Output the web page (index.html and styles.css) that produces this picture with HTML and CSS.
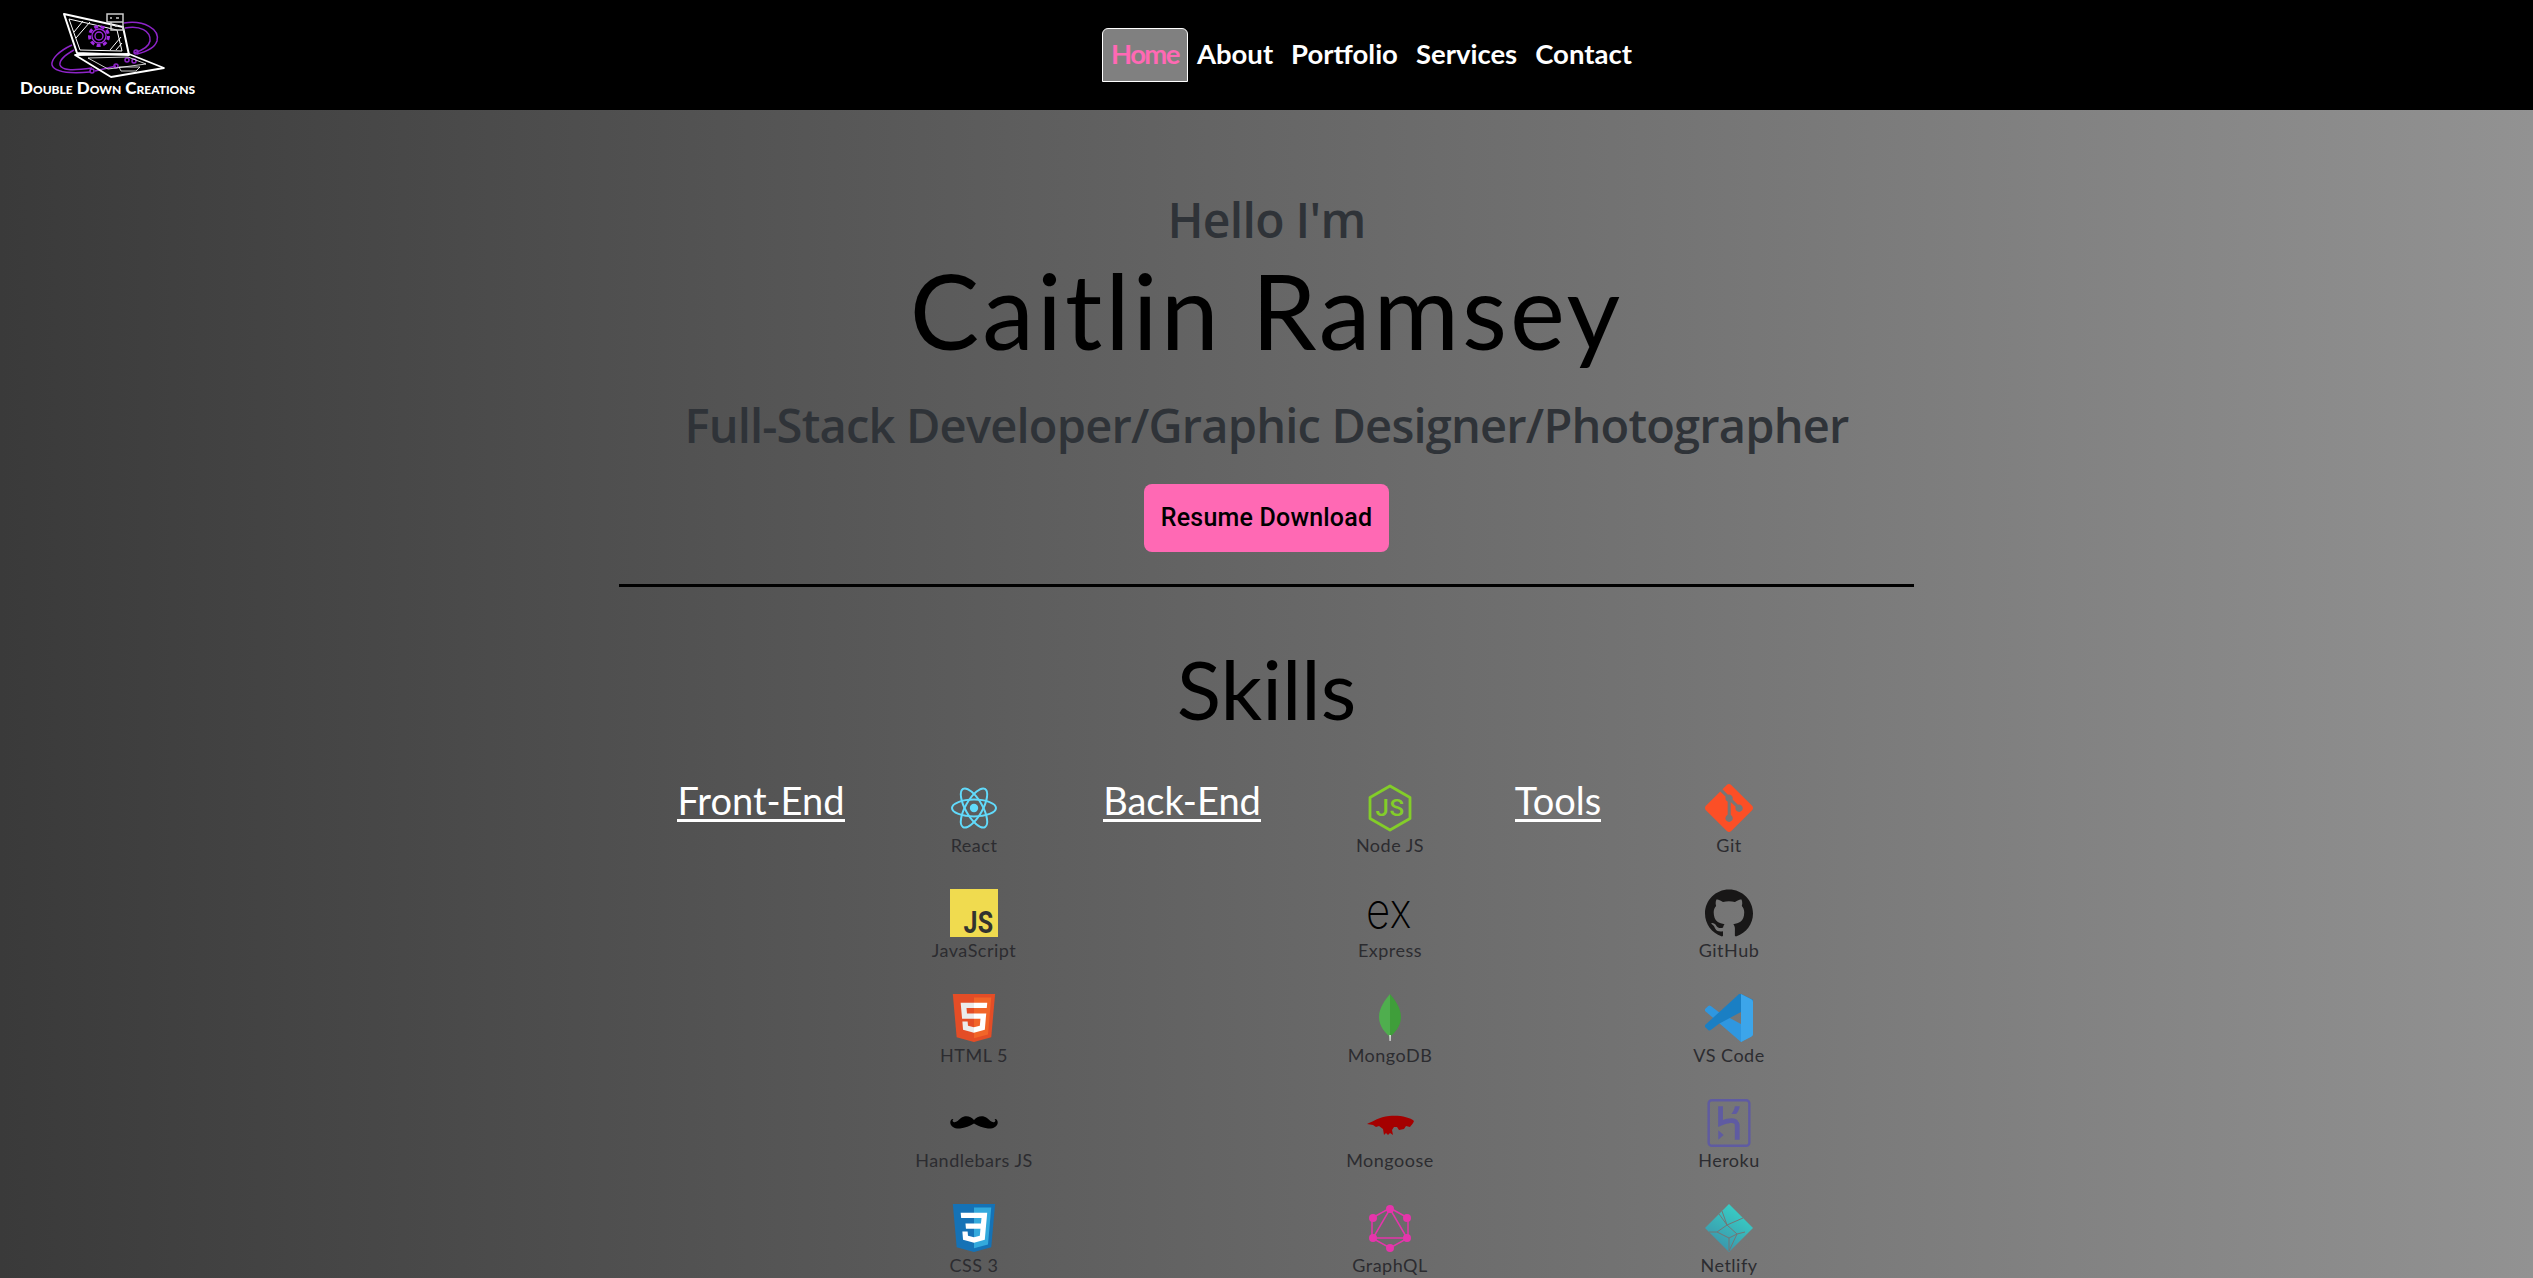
FILE: index.html
```html
<!DOCTYPE html>
<html>
<head>
    <title>Caitlin Ramsey</title>
    <meta charset="utf-8" />
    <link rel="stylesheet" href="styles.css">
</head>
<body>

<!-- Top bar -->
<header class="topbar">
    <a class="logo" href="#">
        <svg class="logo-mark" viewBox="0 0 200 80" width="200" height="80">
            <!-- orbit lines -->
            <g fill="none" stroke="#8e24c8" stroke-width="1.5">
                <path d="M124 23c20-3 36 6 33 18-2 6-8 10-20 13"/>
                <path d="M125 28c15-3 26 3 25 13-1 5-6 9-16 12"/>
                <path d="M72 45c-13 6-21 14-20 20 2 6 14 9 38 7"/>
                <path d="M74 50c-9 5-15 10-14 15 2 5 10 6 32 3"/>
                <path d="M95 71l21-5"/>
                <circle cx="136" cy="52" r="2"/>
                <circle cx="127" cy="60" r="2"/>
                <circle cx="134" cy="61" r="2"/>
                <circle cx="92" cy="71" r="2"/>
                <circle cx="116" cy="66" r="2"/>
            </g>
            <!-- laptop -->
            <g fill="none" stroke="#fff" stroke-linejoin="round">
                <path d="M64 14l59 13 6 28-52-2z" stroke-width="2"/>
                <path d="M69 19l48 11 5 21-42-1z" stroke-width="1"/>
                <path d="M74 32l9-11M76 38l14-16M110 50l11-13M116 50l6-7" stroke-width="1"/>
                <path d="M75 55l54-1 35 14-53 9z" stroke-width="1.800"/>
                <path d="M88 58l40-1 18 7-38 5z" stroke-width=".8"/>
                <path d="M119 67h21l-4 4h-15z" stroke-width=".8"/>
            </g>
            <!-- dice on the lid -->
            <g fill="none" stroke="#ccc" stroke-width="1.500">
                <path d="M107 14h16v8h-16zM111 22h12v8h-12z"/>
                <path d="M110 18h2M116 18h3M115 26h3"/>
            </g>
            <!-- gear -->
            <g fill="none" stroke="#a02be0">
                <circle cx="99" cy="36" r="9.500" stroke-width="3" stroke-dasharray="4 2.600"/>
                <circle cx="99" cy="36" r="7" stroke-width="1.300"/>
                <circle cx="99" cy="36" r="4" stroke-width="1.300"/>
            </g>
        </svg>
        <span class="logo-name">Double Down Creations</span>
    </a>
    <nav class="main-nav">
        <a class="nav-link active" href="#">Home</a>
        <a class="nav-link" href="#">About</a>
        <a class="nav-link" href="#">Portfolio</a>
        <a class="nav-link" href="#">Services</a>
        <a class="nav-link" href="#">Contact</a>
    </nav>
</header>

<main class="page">
    <!-- Intro -->
    <section class="intro">
        <p class="hello">Hello I'm</p>
        <h1 class="name">Caitlin Ramsey</h1>
        <h2 class="role">Full-Stack Developer/Graphic Designer/Photographer</h2>
        <a class="resume-btn" href="#">Resume Download</a>
    </section>

    <hr class="rule">

    <!-- Skills -->
    <section class="skills">
        <h2 class="skills-title">Skills</h2>
        <div class="skills-grid">
            <h3 class="skill-heading">Front-End</h3>
            <ul class="skill-list">
                <li class="skill">
                    <svg class="icon" viewBox="-12 -12 24 24">
                        <circle r="2.100" fill="#61dafb"/>
                        <g fill="none" stroke="#61dafb" stroke-width="1">
                            <ellipse rx="11" ry="4.200"/>
                            <ellipse rx="11" ry="4.200" transform="rotate(60)"/>
                            <ellipse rx="11" ry="4.200" transform="rotate(120)"/>
                        </g>
                    </svg>
                    <span>React</span>
                </li>
                <li class="skill">
                    <svg class="icon lettered" viewBox="0 0 50 50">
                        <rect width="50" height="50" fill="#f0db4f"/>
                        <text class="js-mark" transform="translate(14 46) scale(1 1.250)">JS</text>
                    </svg>
                    <span>JavaScript</span>
                </li>
                <li class="skill">
                    <svg class="icon" viewBox="0 0 512 512">
                        <path fill="#e44d26" d="M71 460L30 0h451l-41 460-185 52z"/>
                        <path fill="#f16529" d="M256 472l149-41 35-394H256z"/>
                        <path fill="#ebebeb" d="M256 208h-75l-5-58h80V94H114l1 15 14 156h127zM256 355h-1l-63-17-4-45h-56l7 89 116 32h1z"/>
                        <path fill="#fff" d="M255 208v57h70l-7 73-63 17v59l116-32 1-10 13-149 2-15h-16zM255 94v56h137l1-12 3-29 1-15z"/>
                    </svg>
                    <span>HTML 5</span>
                </li>
                <li class="skill">
                    <svg class="icon" viewBox="0 0 48 48">
                        <path fill="#000" d="M24 21c-3-4-9-5-13-2-3 2.500-5 5-7.500 4-1-.4-1.300-2 0-3-2-.500-3.500 1.500-3.200 4 .5 3.500 4.700 6 9.700 5.500 5-.5 10-2.500 14-5 4 2.500 9 4.500 14 5 5 .5 9.200-2 9.700-5.500.3-2.500-1.200-4.500-3.200-4 1.300 1 1 2.600 0 3-2.500 1-4.500-1.500-7.500-4-4-3-10-2-13 2z"/>
                    </svg>
                    <span>Handlebars JS</span>
                </li>
                <li class="skill">
                    <svg class="icon" viewBox="0 0 512 512">
                        <path fill="#1572b6" d="M71 460L30 0h451l-41 460-185 52z"/>
                        <path fill="#33a9dc" d="M256 472l149-41 35-394H256z"/>
                        <path fill="#fff" d="M114 94h283l-5 56-7 73-14 159-115 32-117-32-7-89h56l4 45 64 17 62-17 7-73H170l-5-57h165l6-58H119z"/>
                    </svg>
                    <span>CSS 3</span>
                </li>
            </ul>

            <h3 class="skill-heading">Back-End</h3>
            <ul class="skill-list">
                <li class="skill">
                    <svg class="icon" viewBox="0 0 48 48">
                        <path fill="none" stroke="#83cd29" stroke-width="2.800" stroke-linejoin="round" d="M24 2l20 11.500v21L24 46 4 34.500v-21z"/>
                        <text class="node-mark" x="24" y="32" text-anchor="middle">JS</text>
                    </svg>
                    <span>Node JS</span>
                </li>
                <li class="skill">
                    <svg class="icon lettered" viewBox="0 0 48 48">
                        <text class="ex-mark" transform="translate(0 39) scale(1 1.180)">ex</text>
                    </svg>
                    <span>Express</span>
                </li>
                <li class="skill">
                    <svg class="icon" viewBox="0 0 48 48">
                        <path fill="#4fae4e" d="M24 0C20 5 13 13 13 23c0 10 7 16 10 19l1 3z"/>
                        <path fill="#3f9e3a" d="M24 0c4 5 11 13 11 23 0 10-7 16-10 19l-1 3z"/>
                        <path fill="#ddd" d="M23.200 41h1.800l-.3 6h-1.200z"/>
                    </svg>
                    <span>MongoDB</span>
                </li>
                <li class="skill">
                    <svg class="icon" viewBox="0 0 48 48">
                        <path fill="#a50000" d="M1 25c7-3 12-7 22-8 10-1 21 1 25 5-1 3-3 4-4 6l-4-1-2 3-5 1-2-3h-3l-2 3 1 5-3-2-2 2-2-2-2 2-1-6-4-3-3 1-3-2z"/>
                    </svg>
                    <span>Mongoose</span>
                </li>
                <li class="skill">
                    <svg class="icon" viewBox="0 0 48 48">
                        <g fill="none" stroke="#e535ab" stroke-width="1.500">
                            <path d="M24 4l18 10v20L24 44 6 34V14z"/>
                            <path d="M24 5L41 34H7z"/>
                        </g>
                        <g fill="#e535ab">
                            <circle cx="24" cy="5" r="4"/>
                            <circle cx="41" cy="14" r="4"/>
                            <circle cx="41" cy="34" r="4"/>
                            <circle cx="24" cy="44" r="4"/>
                            <circle cx="7" cy="34" r="4"/>
                            <circle cx="7" cy="14" r="4"/>
                        </g>
                    </svg>
                    <span>GraphQL</span>
                </li>
            </ul>

            <h3 class="skill-heading">Tools</h3>
            <ul class="skill-list">
                <li class="skill">
                    <svg class="icon" viewBox="0 0 24 24">
                        <path fill="#fc4f26" d="M23.546 10.930L13.067.452c-.604-.603-1.582-.603-2.188 0L8.708 2.627l2.760 2.760c.645-.215 1.379-.07 1.889.441.516.515.658 1.258.438 1.900l2.658 2.660c.645-.223 1.387-.078 1.900.435.721.720.721 1.884 0 2.604-.719.719-1.881.719-2.600 0-.539-.541-.674-1.337-.404-1.996L12.860 8.955v6.525c.176.086.342.203.488.348.713.721.713 1.883 0 2.600-.719.721-1.889.721-2.609 0-.719-.719-.719-1.879 0-2.598.182-.18.387-.316.605-.406V8.835c-.217-.091-.424-.222-.6-.401-.545-.545-.676-1.342-.396-2.009L7.636 3.700.450 10.881c-.6.605-.6 1.584 0 2.189l10.480 10.477c.604.604 1.582.604 2.186 0l10.430-10.430c.605-.603.605-1.582 0-2.187"/>
                    </svg>
                    <span>Git</span>
                </li>
                <li class="skill">
                    <svg class="icon" viewBox="0 0 24 24">
                        <path fill="#181717" d="M12 .297c-6.630 0-12 5.373-12 12 0 5.303 3.438 9.800 8.205 11.385.6.113.82-.258.82-.577 0-.285-.01-1.040-.015-2.040-3.338.724-4.042-1.610-4.042-1.610C4.422 18.070 3.633 17.700 3.633 17.700c-1.087-.744.084-.729.084-.729 1.205.084 1.838 1.236 1.838 1.236 1.070 1.835 2.809 1.305 3.495.998.108-.776.417-1.305.76-1.605-2.665-.3-5.466-1.332-5.466-5.930 0-1.310.465-2.380 1.235-3.220-.135-.303-.54-1.523.105-3.176 0 0 1.005-.322 3.300 1.230.96-.267 1.980-.399 3-.405 1.020.006 2.040.138 3 .405 2.280-1.552 3.285-1.230 3.285-1.230.645 1.653.24 2.873.12 3.176.765.84 1.230 1.910 1.230 3.220 0 4.610-2.805 5.625-5.475 5.920.42.36.81 1.096.81 2.220 0 1.606-.015 2.896-.015 3.286 0 .315.21.69.825.57C20.565 22.092 24 17.592 24 12.297c0-6.627-5.373-12-12-12"/>
                    </svg>
                    <span>GitHub</span>
                </li>
                <li class="skill">
                    <svg class="icon" viewBox="0 0 24 24">
                        <path fill="#2f97e0" d="M7 9.100L2.900 6a1 1 0 0 0-1.280.06L.33 7.260a1 1 0 0 0 0 1.480L18 24l6-3.500v-2.300z"/>
                        <path fill="#1a7fc4" d="M18 0l6 2.900v2.900L7 14.900l-4.100 3.100a1 1 0 0 1-1.280-.06L.33 16.740a1 1 0 0 1 0-1.480L16.500.5A1.500 1.500 0 0 1 18 0z"/>
                        <path fill="#3ca5ea" d="M18 0l5.150 2.590A1.500 1.500 0 0 1 24 3.940v16.120a1.500 1.500 0 0 1-.85 1.350L18 24z"/>
                    </svg>
                    <span>VS Code</span>
                </li>
                <li class="skill">
                    <svg class="icon heroku-icon" viewBox="0 0 24 24">
                        <path fill="#5a55ad" d="M20.610 0H3.390C2.189 0 1.230.96 1.230 2.160v19.681c0 1.198.959 2.159 2.160 2.159h17.220c1.200 0 2.159-.961 2.159-2.159V2.160C22.770.96 21.811 0 20.610 0zm.96 21.841c0 .539-.421.96-.96.96H3.390c-.54 0-.96-.421-.96-.96V2.160c0-.54.42-.96.96-.96h17.220c.539 0 .96.420.96.96v19.681zM6.630 20.399L9.330 18l-2.700-2.400v4.799zm9.720-9.719c-.479-.48-1.379-1.080-2.879-1.080-1.621 0-3.301.421-4.500.84V3.600h-2.400v10.380l1.680-.78s2.760-1.260 5.160-1.260c1.200 0 1.500.66 1.500 1.260v7.200h2.399v-7.200c.001-.12.001-1.380-.96-2.220zM13.170 7.500h2.400c1.080-1.260 1.620-2.521 1.800-3.900h-2.399c-.241 1.379-.841 2.640-1.801 3.900z"/>
                    </svg>
                    <span>Heroku</span>
                </li>
                <li class="skill">
                    <svg class="icon" viewBox="0 0 48 48">
                        <defs>
                            <linearGradient id="netlifyFill" x1="0.8" y1="0" x2="0.2" y2="1">
                                <stop offset="0" stop-color="#38d5c8"/>
                                <stop offset="1" stop-color="#3b8fa8"/>
                            </linearGradient>
                        </defs>
                        <path fill="url(#netlifyFill)" d="M24 0l24 24-24 24L0 24z"/>
                        <g fill="none" stroke="#757575" stroke-width="1">
                            <path d="M17 7l5 14-10 7-8 0M22 21l16-7M22 21l10 9 8-2M32 30l-8 17M12 28l12 6 8-4M24 34v13M14 10l8 11"/>
                        </g>
                    </svg>
                    <span>Netlify</span>
                </li>
            </ul>
        </div>
    </section>
</main>

</body>
</html>
```

FILE: styles.css
```css
/* Base */
html, body {
    height: 100%;
}

body {
    margin: 0;
    overflow: hidden;
    background: linear-gradient(to right, #3a3a3a, #929292);
    font-family: "Open Sans", sans-serif;
    color: #2f3338;
}

a {
    text-decoration: none;
}

/* Top bar */
.topbar {
    display: flex;
    height: 110px;
    background: #000;
}

.logo {
    display: flex;
    flex-direction: column;
    width: 200px;
    margin-right: 902px;
}

.logo-mark {
    display: block;
    flex: none;
}

.logo-name {
    padding-left: 20px;
    font-family: Lato, sans-serif;
    font-size: 17px;
    line-height: 16px;
    font-weight: 900;
    font-variant: small-caps;
    white-space: nowrap;
    color: #fff;
}

.main-nav {
    display: flex;
    align-items: center;
    height: 54px;
    margin-top: 28px;
}

.nav-link {
    height: 52px;
    padding: 0 8px;
    border: 1px solid transparent;
    font-family: Lato, sans-serif;
    font-size: 27.5px;
    line-height: 50px;
    font-weight: 700;
    color: #fff;
}

.nav-link.active {
    border-color: #fff;
    border-radius: 6px 6px 0 0;
    background: #808080;
    letter-spacing: -1.6px;
    color: #ff69b4;
}

/* Intro */
.intro {
    display: flex;
    flex-direction: column;
    align-items: center;
    padding-top: 80px;
}

.hello {
    margin: 0;
    font-size: 48px;
    line-height: 60px;
    font-weight: 600;
    letter-spacing: -0.7px;
}

.name {
    margin: 0;
    font-family: Lato, sans-serif;
    font-size: 104px;
    line-height: 120px;
    font-weight: 400;
    letter-spacing: 3px;
    color: #000;
}

.role {
    margin: 23px 0 0;
    font-size: 47px;
    line-height: 64px;
    font-weight: 600;
    letter-spacing: -0.8px;
}

.resume-btn {
    margin-top: 27px;
    width: 245px;
    height: 68px;
    border-radius: 8px;
    background: #ff69b4;
    font-family: Roboto, sans-serif;
    font-size: 25px;
    line-height: 68px;
    font-weight: 500;
    letter-spacing: 0.2px;
    text-align: center;
    color: #000;
}

.rule {
    width: 1295px;
    height: 3px;
    margin: 32px auto 0;
    border: 0;
    background: #000;
}

/* Skills */
.skills {
    width: 1295px;
    margin: 0 auto;
}

.skills-title {
    margin: 56px 0 0;
    font-family: Lato, sans-serif;
    font-size: 82px;
    line-height: 90px;
    font-weight: 400;
    text-align: center;
    color: #000;
}

.skills-grid {
    display: grid;
    grid-template-columns: 284px 142px 274px 142px 194px 148px;
    margin-top: 51px;
}

.skill-heading {
    justify-self: center;
    height: 37px;
    margin: -2px 0 0;
    border-bottom: 3px solid #fff;
    font-family: Lato, sans-serif;
    font-size: 38px;
    line-height: 37px;
    font-weight: 400;
    color: #fff;
}

.skill-list {
    margin: 0;
    padding: 0;
    list-style: none;
}

.skill {
    display: flex;
    flex-direction: column;
    align-items: center;
    height: 105px;
    font-family: Lato, sans-serif;
    font-size: 18px;
    line-height: 22px;
    letter-spacing: 0.5px;
    color: #2c2c30;
}

.skill span {
    white-space: nowrap;
}

.icon {
    display: block;
    flex: none;
    width: 48px;
    height: 48px;
    margin-bottom: 2px;
}

.lettered {
    overflow: visible;
}

.heroku-icon {
    opacity: 0.8;
}

/* Lettering inside the logos */
.js-mark {
    font-family: Roboto, sans-serif;
    font-size: 26px;
    font-weight: 700;
    fill: #323330;
}

.node-mark {
    font-family: Roboto, sans-serif;
    font-size: 24px;
    font-weight: 500;
    fill: #83cd29;
}

.ex-mark {
    font-family: Inter, sans-serif;
    font-size: 42px;
    font-weight: 200;
    fill: #000;
}
```
